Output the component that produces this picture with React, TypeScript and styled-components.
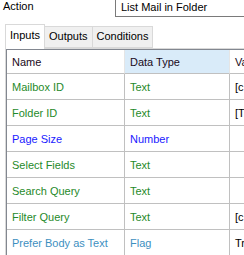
import React from "react";
import styled, { createGlobalStyle } from "styled-components";

const Global = createGlobalStyle`
  html, body { margin: 0; padding: 0; background: #ffffff; }
  body { font-family: "Liberation Sans", Arial, sans-serif; font-size: 11px; overflow: hidden; }
`;

const Page = styled.div`
  width: 244px;
  height: 255px;
  overflow: hidden;
  display: flex;
  flex-direction: column;
  background: #ffffff;
`;

const TopBar = styled.div`
  height: 17px;
  display: flex;
  align-items: flex-end;
  overflow: hidden;
  flex: none;
`;

const Label = styled.div`
  width: 112px;
  padding-left: 3px;
  align-self: flex-start;
  line-height: 13px;
  color: #000;
`;

const TextBox = styled.div`
  flex: 1;
  height: 21px;
  box-sizing: border-box;
  border: 1px solid #7a7a7a;
  border-right: none;
  background: #fff;
  padding: 4px 0 0 5px;
  line-height: 13px;
  color: #000;
  white-space: nowrap;
`;

const TabStrip = styled.div`
  flex: none;
  display: flex;
  align-items: flex-end;
  height: 31px;
  padding-left: 5px;
  background: #ffffff;
  position: relative;
  z-index: 1;
`;

const Tab = styled.div<{ $active?: boolean }>`
  box-sizing: border-box;
  height: ${(p) => (p.$active ? "25px" : "22px")};
  margin-bottom: ${(p) => (p.$active ? "-1px" : "0")};
  padding: ${(p) => (p.$active ? "4px 4px 0 4px" : "3px 4px 0 4px")};
  border: 1px solid #d9d9d9;
  border-bottom: ${(p) => (p.$active ? "none" : "1px solid #d9d9d9")};
  margin-left: -1px;
  background: ${(p) => (p.$active ? "#ffffff" : "#f0f0f0")};
  color: #000;
  line-height: 13px;
  white-space: nowrap;
  &:first-child { margin-left: 0; }
`;

const Panel = styled.div`
  flex: 1;
  margin-left: 5px;
  border-top: 1px solid #d9d9d9;
  border-left: 1px solid #d9d9d9;
  background: #ffffff;
  display: flex;
  min-height: 0;
`;

const Grid = styled.div`
  flex: 1;
  border-top: 1px solid #828790;
  border-left: 1px solid #828790;
  display: grid;
  grid-template-columns: 118px 105px 60px;
  grid-auto-rows: 26px;
  grid-template-rows: 24px;
  overflow: hidden;
  min-width: 0;
`;

const HeadCell = styled.div<{ $sorted?: boolean }>`
  background: ${(p) => (p.$sorted ? "#d9ebf9" : "#ffffff")};
  border-right: 1px solid #e5e5e5;
  border-bottom: 1px solid #c0c0c0;
  padding-left: 5px;
  display: flex;
  align-items: center;
  color: #1a0a1a;
  white-space: nowrap;
  overflow: hidden;
`;

const Cell = styled.div<{ $color: string }>`
  border-right: 1px solid #c0c0c0;
  border-bottom: 1px solid #c0c0c0;
  padding-left: 5px;
  display: flex;
  align-items: center;
  color: ${(p) => p.$color};
  white-space: nowrap;
  overflow: hidden;
`;

type Row = { name: string; type: string; value: string; color: string };

const GREEN = "#228b22";
const rows: Row[] = [
  { name: "Mailbox ID", type: "Text", value: "[c", color: "#1f8a2a" },
  { name: "Folder ID", type: "Text", value: "[T", color: "#1f8a2a" },
  { name: "Page Size", type: "Number", value: "", color: "#1a1aff" },
  { name: "Select Fields", type: "Text", value: "", color: "#1f8a2a" },
  { name: "Search Query", type: "Text", value: "", color: "#1f8a2a" },
  { name: "Filter Query", type: "Text", value: "[c", color: "#1f8a2a" },
  { name: "Prefer Body as Text", type: "Flag", value: "Tr", color: "#3d8fbf" },
];

export default function App() {
  void GREEN;
  return (
    <Page>
      <Global />
      <TopBar>
        <Label>Action</Label>
        <TextBox>List Mail in Folder</TextBox>
      </TopBar>
      <TabStrip>
        <Tab $active>Inputs</Tab>
        <Tab>Outputs</Tab>
        <Tab>Conditions</Tab>
      </TabStrip>
      <Panel>
        <Grid>
          <HeadCell>Name</HeadCell>
          <HeadCell $sorted>Data Type</HeadCell>
          <HeadCell>Value</HeadCell>
          {rows.map((r) => (
            <React.Fragment key={r.name}>
              <Cell $color={r.color}>{r.name}</Cell>
              <Cell $color={r.color}>{r.type}</Cell>
              <Cell $color="#000">{r.value}</Cell>
            </React.Fragment>
          ))}
        </Grid>
      </Panel>
    </Page>
  );
}
